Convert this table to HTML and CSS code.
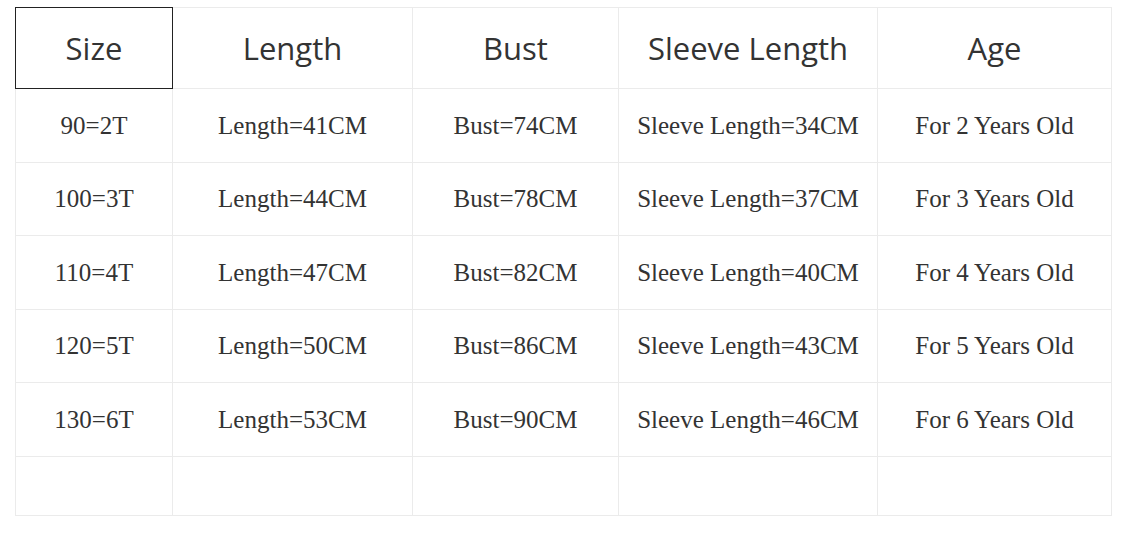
FILE: index.html
```html
<!DOCTYPE html>
<html>
<head>
<meta charset="utf-8">
<link rel="stylesheet" href="styles.css">
</head>
<body>
<table class="size-table">
  <colgroup>
    <col class="c1"><col class="c2"><col class="c3"><col class="c4"><col class="c5">
  </colgroup>
  <thead>
    <tr class="head-row">
      <th class="first">Size</th>
      <th>Length</th>
      <th>Bust</th>
      <th>Sleeve Length</th>
      <th>Age</th>
    </tr>
  </thead>
  <tbody>
    <tr class="r-a"><td>90=2T</td><td>Length=41CM</td><td>Bust=74CM</td><td>Sleeve Length=34CM</td><td>For 2 Years Old</td></tr>
    <tr class="r-b"><td>100=3T</td><td>Length=44CM</td><td>Bust=78CM</td><td>Sleeve Length=37CM</td><td>For 3 Years Old</td></tr>
    <tr class="r-a"><td>110=4T</td><td>Length=47CM</td><td>Bust=82CM</td><td>Sleeve Length=40CM</td><td>For 4 Years Old</td></tr>
    <tr class="r-b"><td>120=5T</td><td>Length=50CM</td><td>Bust=86CM</td><td>Sleeve Length=43CM</td><td>For 5 Years Old</td></tr>
    <tr class="r-a"><td>130=6T</td><td>Length=53CM</td><td>Bust=90CM</td><td>Sleeve Length=46CM</td><td>For 6 Years Old</td></tr>
    <tr class="r-empty"><td></td><td></td><td></td><td></td><td></td></tr>
  </tbody>
</table>
</body>
</html>
```
FILE: styles.css
```css
html, body {
  margin: 0;
  padding: 0;
  background: #ffffff;
}
body {
  padding: 7px 15px;
}
.size-table {
  border-collapse: collapse;
  table-layout: fixed;
  width: 1096px;
}
.c1 { width: 157px; }
.c2 { width: 240px; }
.c3 { width: 206px; }
.c4 { width: 259px; }
.c5 { width: 234px; }
.size-table th,
.size-table td {
  border: 1px solid #ebebeb;
  padding: 0;
  text-align: center;
  vertical-align: middle;
  color: #333333;
}
.size-table th {
  font-family: "Open Sans", "Noto Sans", sans-serif;
  font-weight: 400;
  font-size: 31px;
}
.size-table th.first {
  border: 1px solid #222222;
}
.size-table td {
  font-family: "Liberation Serif", serif;
  font-size: 25px;
}
.head-row { height: 81px; }
.r-a { height: 74px; }
.r-b { height: 73px; }
.r-empty { height: 59px; }
```
